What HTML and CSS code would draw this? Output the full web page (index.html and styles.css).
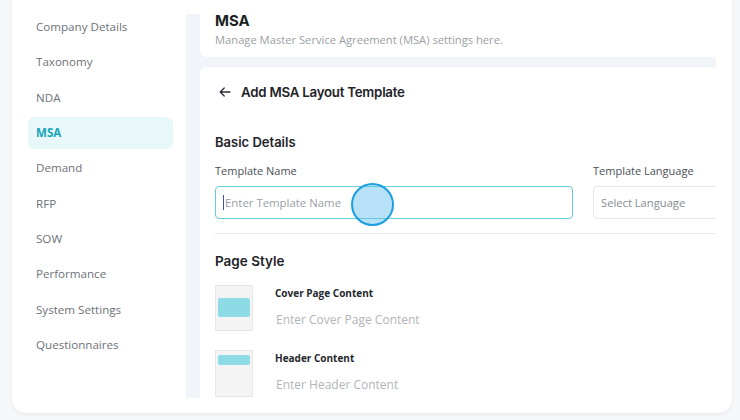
FILE: index.html
```html
<!DOCTYPE html>
<html>
<head>
<meta charset="utf-8">
<link rel="stylesheet" href="styles.css">
</head>
<body>
<div class="shell">
  <nav class="sidebar">
    <div class="nav-item">Company Details</div>
    <div class="nav-item">Taxonomy</div>
    <div class="nav-item">NDA</div>
    <div class="nav-item active">MSA</div>
    <div class="nav-item">Demand</div>
    <div class="nav-item">RFP</div>
    <div class="nav-item">SOW</div>
    <div class="nav-item">Performance</div>
    <div class="nav-item">System Settings</div>
    <div class="nav-item">Questionnaires</div>
  </nav>
  <main class="main">
    <div class="main-inner">
      <section class="page-head">
        <h1 class="page-title">MSA</h1>
        <p class="page-desc">Manage Master Service Agreement (MSA) settings here.</p>
      </section>
      <section class="form-card">
        <div class="form-title-row">
          <svg class="back-icon" width="12" height="12" viewBox="0 0 12 12" fill="none" stroke="#2b2f36" stroke-width="1.3" stroke-linecap="round" stroke-linejoin="round"><path d="M11 6H1.2M5.2 2 1.2 6l4 4"/></svg>
          <span class="form-title">Add MSA Layout Template</span>
        </div>
        <h2 class="section-title basic">Basic Details</h2>
        <div class="field-grid">
          <div class="field">
            <label class="field-label">Template Name</label>
            <div class="input focused"><span class="caret"></span><span class="ph">Enter Template Name</span></div>
          </div>
          <div class="field">
            <label class="field-label">Template Language</label>
            <div class="input"><span class="ph sel">Select Language</span></div>
          </div>
        </div>
        <div class="divider"></div>
        <h2 class="section-title page-style">Page Style</h2>
        <div class="style-row">
          <div class="thumb"><div class="thumb-fill cover"></div></div>
          <div class="style-text">
            <div class="style-label">Cover Page Content</div>
            <div class="style-ph">Enter Cover Page Content</div>
          </div>
        </div>
        <div class="style-row second">
          <div class="thumb tall"><div class="thumb-fill header"></div></div>
          <div class="style-text">
            <div class="style-label">Header Content</div>
            <div class="style-ph">Enter Header Content</div>
          </div>
        </div>
      </section>
    </div>
  </main>
</div>
<div class="touch"></div>
</body>
</html>
```

FILE: styles.css
```css
* { box-sizing: border-box; }
html, body { margin: 0; padding: 0; }
body {
  width: 740px;
  height: 420px;
  overflow: hidden;
  background: #f6f7f9;
  font-family: "Open Sans", "Noto Sans", sans-serif;
  position: relative;
}
.shell {
  margin: -20px 0 0 12px;
  width: 720px;
  height: 433px;
  background: #ffffff;
  border-radius: 14px;
  box-shadow: 0 1px 4px rgba(20, 30, 50, 0.07);
  display: flex;
}
.sidebar {
  flex: 0 0 174px;
  padding: 31px 13px 0 16px;
  display: flex;
  flex-direction: column;
  gap: 3.33px;
}
.nav-item {
  height: 32px;
  line-height: 32px;
  padding-left: 8px;
  font-size: 11.6px;
  color: #6c727a;
  border-radius: 6px;
}
.nav-item.active {
  background: #e7f7fa;
  color: #17a6ba;
  font-weight: 700;
}
.main {
  flex: 0 0 530px;
  margin: 34px 0 15px 0;
  background: #f1f4f8;
  padding-left: 14px;
  overflow: hidden;
}
.main-inner {
  width: 620px;
}
.page-head {
  background: #ffffff;
  padding: 0 15px 9px 15px;
  border-radius: 0 0 6px 6px;
}
.page-title {
  margin: 0;
  font-family: "Inter", sans-serif;
  font-size: 15px;
  line-height: 14px;
  font-weight: 700;
  color: #1c1f24;
}
.page-desc {
  margin: 4px 0 0 0;
  font-size: 11.2px;
  line-height: 16px;
  color: #9a9fa6;
}
.form-card {
  margin-top: 10px;
  background: #ffffff;
  border-radius: 6px;
  padding: 15px 15px 20px 15px;
}
.form-title-row {
  display: flex;
  align-items: center;
  height: 20px;
  padding-left: 4px;
  gap: 10px;
}
.back-icon { display: block; }
.form-title {
  font-family: "Inter", sans-serif;
  font-size: 13.3px;
  font-weight: 600;
  letter-spacing: -0.25px;
  color: #1f2329;
}
.section-title {
  margin: 0;
  font-family: "Inter", sans-serif;
  font-weight: 600;
  color: #1f2329;
  line-height: 18px;
}
.section-title.basic {
  margin-top: 31px;
  font-size: 13px;
}
.field-grid {
  display: grid;
  grid-template-columns: 358px 1fr;
  column-gap: 20px;
  margin-top: 12px;
}
.field { display: flex; flex-direction: column; }
.field-label {
  font-size: 11px;
  line-height: 16px;
  color: #4a4f57;
}
.input {
  margin-top: 7px;
  height: 33px;
  border: 1px solid #e5e7ea;
  border-radius: 4px;
  display: flex;
  align-items: center;
  padding-left: 7px;
}
.input.focused {
  border-color: #63cdd8;
}
.caret {
  width: 1px;
  height: 15px;
  background: #3d4fb0;
  margin-right: 1px;
}
.ph {
  font-size: 11.4px;
  color: #9ba0a7;
}
.ph.sel {
  font-size: 11.2px;
  color: #858b92;
}
.divider {
  margin-top: 14px;
  height: 1px;
  background: #e6e8eb;
}
.section-title.page-style {
  margin-top: 18px;
  font-size: 13.5px;
}
.style-row {
  margin-top: 15px;
  display: flex;
  gap: 22px;
}
.style-row.second { margin-top: 19px; }
.thumb {
  width: 38px;
  height: 46px;
  background: #f4f4f4;
  border: 1px solid #e6e6e6;
  padding: 12px 2px 0 2px;
}
.thumb.tall {
  height: 47px;
  padding-top: 4px;
}
.thumb-fill {
  background: #8ddbe4;
  border-radius: 2px;
}
.thumb-fill.cover { height: 19px; }
.thumb-fill.header { height: 10px; }
.style-text {
  padding-top: 1px;
}
.style-label {
  font-size: 10px;
  line-height: 14px;
  font-weight: 700;
  color: #23272d;
}
.style-ph {
  margin-top: 11px;
  margin-left: 1px;
  font-size: 12px;
  line-height: 18px;
  color: #b1b5bb;
}
.touch {
  position: absolute;
  left: 351px;
  top: 183px;
  width: 43px;
  height: 43px;
  border-radius: 50%;
  border: 2px solid #1c9fe0;
  background: rgba(110, 195, 240, 0.5);
}
```
